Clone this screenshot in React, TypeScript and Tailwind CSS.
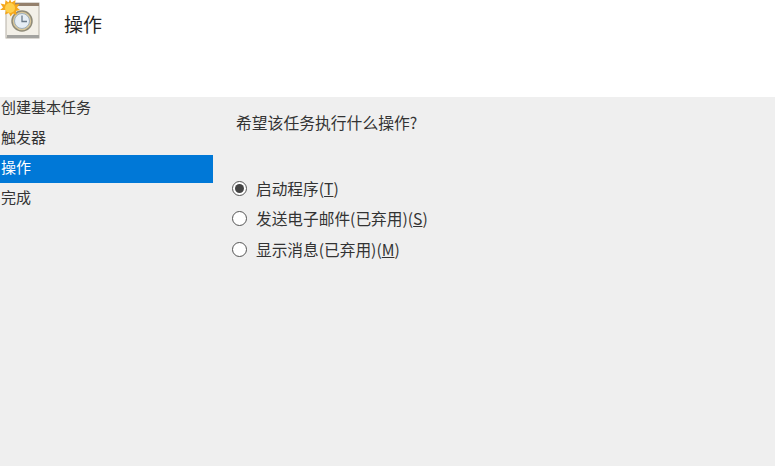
const font = { fontFamily: '"Noto Sans CJK SC", sans-serif' };

function Radio({ checked, children }: { checked?: boolean; children: React.ReactNode }) {
  return (
    <div className="flex h-[30.5px] items-center">
      <span className="flex h-[15px] w-[15px] shrink-0 items-center justify-center rounded-full border border-[#555555] bg-white">
        {checked && <span className="h-[9px] w-[9px] rounded-full bg-[#444444]" />}
      </span>
      <span className="ml-[9px] whitespace-nowrap text-[15.7px] leading-[17px] text-[#333333]">{children}</span>
    </div>
  );
}

function Logo() {
  return (
    <svg width="42" height="42" viewBox="0 0 42 42" className="shrink-0">
      <rect x="6" y="3" width="33" height="35" fill="#f3f0e8" stroke="#b5b0a5" />
      <rect x="10" y="3" width="29" height="3" fill="#94806c" />
      <rect x="7" y="35" width="32" height="3" fill="#a3a3a0" />
      <circle cx="22" cy="21" r="10" fill="#d9c79a" stroke="#8e8a78" strokeWidth="1.5" />
      <circle cx="22" cy="21" r="7.5" fill="#e6eef5" stroke="#9fb0bd" />
      <path d="M22 15.500V21.500H27" fill="none" stroke="#6a7a88" strokeWidth="1.3" />
      <path d="M10 -1l1.500 3.500L15.500 0l-.5 4.500 4.500-.5-2.500 3.500 3 2.500-4 1 .5 4-3.500-1.500-2.500 3-1.500-3.500-4 1.500 1-4.500L0 10l3-2.500L0.500 3.500 5 4.500 5.500 0 8.500 2.500z" fill="#f5a81c" />
      <circle cx="10" cy="8" r="5" fill="#ffcf4a" />
    </svg>
  );
}

export default function App() {
  return (
    <div className="flex h-[466px] w-[775px] flex-col overflow-hidden bg-white" style={font}>
      <header className="flex h-[97px] shrink-0 items-start">
        <Logo />
        <h1 className="ml-[22px] mt-[13px] text-[19px] font-normal leading-[22px] text-[#222222]">操作</h1>
      </header>
      <main className="flex flex-1 bg-[#efefef]">
        <nav className="-mt-[2px] flex w-[213px] shrink-0 flex-col gap-[2px] text-[15px] leading-[23px] text-[#333333]">
          <div className="h-[28px] pl-[1px]">创建基本任务</div>
          <div className="h-[28px] pl-[1px]">触发器</div>
          <div className="h-[28px] bg-[#0078d7] pl-[1px] text-white">操作</div>
          <div className="h-[28px] pl-[1px]">完成</div>
        </nav>
        <section className="pl-[19px] pt-[16px]">
          <p className="ml-[4px] text-[15.8px] leading-[20px] text-[#333333]">希望该任务执行什么操作?</p>
          <div className="mt-[40px]">
            <Radio checked>启动程序(<span className="underline">T</span>)</Radio>
            <Radio>发送电子邮件(已弃用)(<span className="underline">S</span>)</Radio>
            <Radio>显示消息(已弃用)(<span className="underline">M</span>)</Radio>
          </div>
        </section>
      </main>
    </div>
  );
}
